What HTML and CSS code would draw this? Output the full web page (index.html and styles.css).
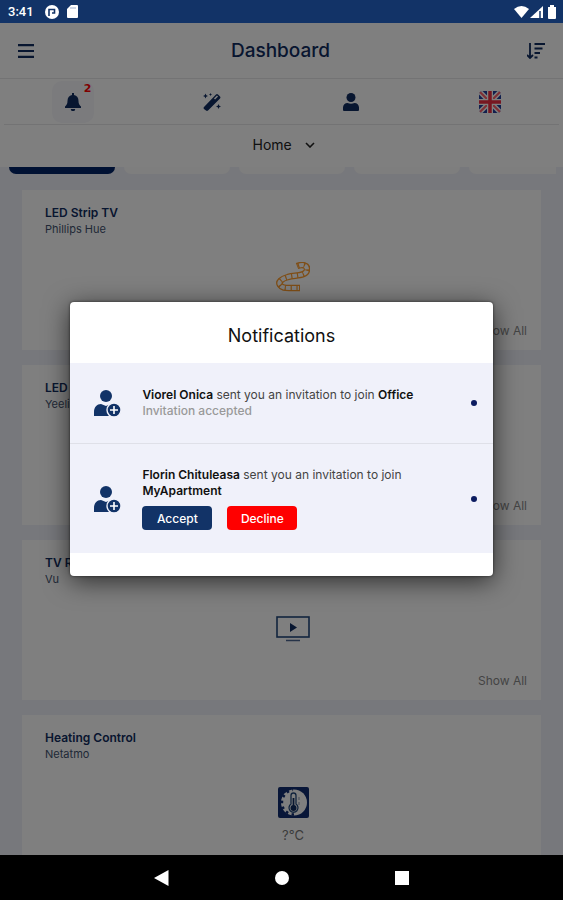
FILE: index.html
```
<!DOCTYPE html>
<html lang="en">

<head>
    <title>Dashboard</title>
    <meta charset="utf-8">
    <meta name="viewport" content="width=device-width, initial-scale=1.0">
    <link rel="stylesheet" href="styles.css">
</head>

<body>
    <!-- shared person icon -->
    <svg class="defs" width="0" height="0">
        <symbol id="invite" viewBox="0 0 28 28">
            <circle cx="13" cy="7" r="6" />
            <path d="M1 27v-4c0-5 3-8 7-8l5 2 5-2c3 0 5 2 6 4v8H3c-1 0-2 0-2 0z" />
            <circle cx="21" cy="21" r="7" stroke="#f0f1fa" stroke-width="1.4" />
            <path d="M21 17v8M17 21h8" fill="none" stroke="#fff" stroke-width="1.6" />
        </symbol>
    </svg>

    <div class="status">
        <span class="time">3:41</span>
        <svg width="14" height="14" viewBox="0 0 14 14">
            <circle cx="7" cy="7" r="7" fill="#fff" />
            <path d="M4 11V4.500h5.500V8H7" fill="none" stroke="#123367" stroke-width="1.600" />
        </svg>
        <svg width="11" height="13" viewBox="0 0 11 13">
            <path d="M4 0h6a1 1 0 0 1 1 1v11a1 1 0 0 1-1 1H1a1 1 0 0 1-1-1V4z" fill="#fff" />
            <path d="M4 2v2M6 2v2M8 2v2" stroke="#9fb0cd" />
        </svg>
        <svg class="signal" width="44" height="14" viewBox="0 0 44 14" fill="#fff">
            <path d="M0 4q7.500-6 15 0L7.500 13z" />
            <path d="M16 13L29 1v12z" />
            <path d="M26 6v7" stroke="#123367" stroke-width="1.500" />
            <path d="M34 2h2V0h4v2h2v11a1 1 0 0 1-1 1h-6a1 1 0 0 1-1-1z" />
        </svg>
    </div>

    <div class="screen">
        <header class="header">
            <button class="icon-btn" aria-label="Menu">
                <svg width="16" height="14" viewBox="0 0 16 14">
                    <path d="M0 1.200h16M0 7h16M0 12.800h16" stroke="#102c60" stroke-width="2.200" />
                </svg>
            </button>
            <h1>Dashboard</h1>
            <button class="icon-btn" aria-label="Sort">
                <svg width="18" height="16" viewBox="0 0 18 16" fill="none" stroke="#102c60" stroke-width="1.800">
                    <path d="M3 0v14M0 12l3 3 3-3M7.500 1H18M7.500 5.500h8M7.500 10h5.500M7.500 14.500h3" />
                </svg>
            </button>
        </header>

        <nav class="toolbar">
            <button class="tool active" aria-label="Notifications">
                <svg width="16" height="18" viewBox="0 0 16 18" fill="#102c60">
                    <path d="M7 0h2v2c3 .5 4.500 3 4.500 6 0 3 1 4 2.500 5.500V15H0v-1.500C1.500 12 2.500 11 2.500 8c0-3 1.500-5.500 4.500-6z" />
                    <path d="M5.800 16h4.400a2.200 2.200 0 0 1-4.400 0z" />
                </svg>
                <span class="badge">2</span>
            </button>
            <button class="tool" aria-label="Scenes">
                <svg width="18" height="18" viewBox="0 0 18 18" fill="#102c60">
                    <path d="M1 14L13 1.500a1.500 1.500 0 0 1 2 0L17 3.500a1.500 1.500 0 0 1 0 2L5 17.500a1.500 1.500 0 0 1-2 0L1 16a1.500 1.500 0 0 1 0-2z" />
                    <path d="M11.500 6L14.500 3" stroke="#fff" stroke-width="1.600" />
                    <path d="M2.500 .5l.8 1.700 1.700.8-1.700.8-.8 1.700-.8-1.700L0 3l1.700-.8zM15.500 11l.8 1.700 1.700.8-1.700.8-.8 1.700-.8-1.700-1.700-.8 1.700-.8zM7.500 0l.5 1 1 .5-1 .5-.5 1-.5-1-1-.5 1-.5z" />
                </svg>
            </button>
            <button class="tool" aria-label="Profile">
                <svg width="16" height="18" viewBox="0 0 16 18" fill="#102c60">
                    <circle cx="8" cy="4.500" r="4.500" />
                    <path d="M0 17v-2.500C0 12 2 10 4.500 10q3.500 1.600 7 0C14 10 16 12 16 14.500V17a1 1 0 0 1-1 1H1a1 1 0 0 1-1-1z" />
                </svg>
            </button>
            <button class="tool" aria-label="Language">
                <svg class="flag" width="22" height="22" viewBox="0 0 22 22">
                    <rect width="22" height="22" fill="#233f9c" />
                    <path d="M0 0l22 22M22 0L0 22" stroke="#fff" stroke-width="5" />
                    <path d="M0 0l22 22M22 0L0 22" stroke="#ff5f6b" stroke-width="2" />
                    <path d="M11 0v22M0 11h22" stroke="#fff" stroke-width="6" />
                    <path d="M11 0v22M0 11h22" stroke="#ee2f42" stroke-width="3.500" />
                </svg>
            </button>
        </nav>

        <div class="home">
            <select aria-label="Home">
                <option>Home</option>
            </select>
            <svg width="10" height="6" viewBox="0 0 10 6">
                <path d="M1 1l4 4 4-4" fill="none" stroke="#222" stroke-width="1.600" />
            </svg>
        </div>

        <main class="content">
            <div class="tabs">
                <span class="tab selected"></span>
                <span class="tab"></span>
                <span class="tab"></span>
                <span class="tab"></span>
                <span class="tab"></span>
            </div>

            <div class="cards">
                <section class="card">
                    <h2>LED Strip TV</h2>
                    <p class="brand">Phillips Hue</p>
                    <div class="device">
                        <svg width="34" height="30" viewBox="0 0 34 30" fill="none">
                            <path d="M21 4c5-2 11-1 10 4-1 6-10 5-19 7C5 17 2 20 4 23c2 3 5 3 9 3h11" stroke="#ff9d2e" stroke-width="6.500" />
                            <path d="M22 4c5-2 9-1 9 4-1 6-10 5-19 7C5 17 2 20 4 23c2 3 5 3 9 3h10" stroke="#fff" stroke-width="4" />
                            <path d="M22 4c5-2 9-1 9 4-1 6-10 5-19 7C5 17 2 20 4 23c2 3 5 3 9 3h11" stroke="#ff9d2e" stroke-width="5" stroke-dasharray="1.200 4.600" />
                        </svg>
                    </div>
                    <a class="more" href="#">Show All</a>
                </section>
                <section class="card">
                    <h2>LED Strip</h2>
                    <p class="brand">Yeelight</p>
                    <div class="device"></div>
                    <a class="more" href="#">Show All</a>
                </section>
                <section class="card">
                    <h2>TV Room</h2>
                    <p class="brand">Vu</p>
                    <div class="device">
                        <svg width="34" height="30" viewBox="0 -4 34 30">
                            <rect x="1" y="1" width="32" height="20" fill="none" stroke="#24497c" stroke-width="1.600" />
                            <path d="M14 7l7 4.500-7 4.500z" fill="#102c60" />
                            <path d="M10 24.500h14" stroke="#4c6690" stroke-width="1.500" />
                        </svg>
                    </div>
                    <a class="more" href="#">Show All</a>
                </section>
                <section class="card">
                    <h2>Heating Control</h2>
                    <p class="brand">Netatmo</p>
                    <div class="device">
                        <svg width="31" height="31" viewBox="0 0 31 31">
                            <rect width="31" height="31" rx="2" fill="#102c70" />
                            <circle cx="16" cy="15.500" r="13" fill="#fff" />
                            <path d="M16 27.500a12 12 0 0 1-9-20 12 12 0 0 1 8-4.500" fill="none" stroke="#102c70" stroke-width="2.500" stroke-dasharray="2.500 3.500" />
                            <path d="M13 8.500a2.500 2.500 0 0 1 5 0V17a4.500 4.500 0 1 1-5 0z" fill="#fff" stroke="#24497c" stroke-width="1.300" />
                            <circle cx="15.500" cy="21" r="3" fill="#102c60" />
                            <path d="M15.500 11v9" stroke="#102c60" stroke-width="1.800" />
                            <path d="M21 10v3M21 15v3" stroke="#8796b0" />
                        </svg>
                        <span class="temp">?°C</span>
                    </div>
                </section>
            </div>
        </main>

        <div class="overlay">
            <div class="modal" role="dialog" aria-labelledby="modal-title">
                <h2 class="modal-title" id="modal-title">Notifications</h2>
                <ul class="list">
                    <li class="item">
                        <svg class="avatar" width="28" height="28"><use href="#invite" /></svg>
                        <div class="message">
                            <p><b>Viorel Onica</b> sent you an invitation to join <b>Office</b></p>
                            <p class="accepted">Invitation accepted</p>
                        </div>
                        <span class="dot"></span>
                    </li>
                    <li class="item tall">
                        <svg class="avatar" width="28" height="28"><use href="#invite" /></svg>
                        <div class="message">
                            <p><b>Florin Chituleasa</b> sent you an invitation to join <b>MyApartment</b></p>
                            <div class="actions">
                                <button class="accept">Accept</button>
                                <button class="decline">Decline</button>
                            </div>
                        </div>
                        <span class="dot"></span>
                    </li>
                </ul>
            </div>
        </div>
    </div>

    <nav class="android">
        <button class="icon-btn" aria-label="Back">
            <svg width="16" height="16" viewBox="0 0 16 16"><path d="M14.500 0v16L0 8z" fill="#fff" /></svg>
        </button>
        <button class="icon-btn" aria-label="Home screen">
            <svg width="16" height="16" viewBox="0 0 16 16"><circle cx="8" cy="8" r="7" fill="#fff" /></svg>
        </button>
        <button class="icon-btn" aria-label="Recent apps">
            <svg width="16" height="16" viewBox="0 0 16 16"><rect x="1" y="1" width="14" height="14" fill="#fff" /></svg>
        </button>
    </nav>
</body>

</html>
```

FILE: styles.css
```
* {
    box-sizing: border-box;
}

body {
    margin: 0;
    height: 100vh;
    display: flex;
    flex-direction: column;
    overflow: hidden;
    font-family: Inter, "Open Sans", sans-serif;
    font-size: 12px;
    line-height: 16px;
    color: #444;
}

h1,
h2,
p,
ul {
    margin: 0;
    padding: 0;
}

button {
    font-family: inherit;
    border: 0;
    padding: 0;
    background: none;
    cursor: pointer;
}

svg {
    display: block;
}

.defs {
    position: absolute;
}

.status {
    flex: none;
    display: flex;
    align-items: center;
    gap: 8px;
    height: 23px;
    padding: 0 5px 0 8px;
    background-color: #123367;
    color: #fff;
}

.time {
    margin-right: 3px;
    font-family: Roboto, sans-serif;
    font-size: 13px;
    font-weight: 500;
}

.signal {
    margin-left: auto;
}

.screen {
    flex: 1;
    min-height: 0;
    position: relative;
    display: flex;
    flex-direction: column;
    overflow: hidden;
    background-color: #fff;
}

.header {
    flex: none;
    display: flex;
    justify-content: space-between;
    align-items: center;
    height: 56px;
    padding: 0 18px;
    border-bottom: 1px solid #e6e6e8;
}

.header h1 {
    font-size: 19px;
    line-height: 24px;
    font-weight: 500;
    color: #102c60;
}

.toolbar {
    flex: none;
    display: grid;
    grid-template-columns: repeat(4, 1fr);
    justify-items: center;
    align-items: center;
    height: 46px;
    margin: 0 4px;
    border-bottom: 1px solid #e6e6e8;
}

.tool {
    position: relative;
    display: flex;
    justify-content: center;
    align-items: center;
    width: 42px;
    height: 42px;
    border-radius: 10px;
}

.tool.active {
    background-color: #f6f6fb;
}

.badge {
    position: absolute;
    top: 1px;
    right: 3px;
    font-family: "DejaVu Sans", sans-serif;
    font-size: 11px;
    line-height: 14px;
    font-weight: bold;
    color: #f00;
}

.flag {
    border-radius: 4px;
}

.home {
    flex: none;
    display: flex;
    justify-content: center;
    align-items: center;
    gap: 12px;
    height: 42px;
    padding: 0 0 3px 4px;
}

.home select {
    appearance: none;
    border: 0;
    padding: 0;
    background: none;
    font-family: inherit;
    font-size: 14px;
    color: #222;
}

.content {
    flex: 1;
    min-height: 0;
    overflow: hidden;
    background-color: #eff0f8;
}

.tabs {
    display: flex;
    gap: 9px;
    margin: 0 7px 0 9px;
    overflow: hidden;
}

.tab {
    flex: none;
    width: 106px;
    height: 7px;
    border-radius: 0 0 7px 7px;
    background-color: #fcfcfc;
}

.tab.selected {
    background-color: #002266;
}

.cards {
    display: grid;
    gap: 15px;
    padding: 16px 22px;
}

.card {
    display: flex;
    flex-direction: column;
    height: 160px;
    padding: 14px 0 11px 23px;
    background-color: #fff;
}

.card h2 {
    font-size: 12px;
    line-height: 17px;
    font-weight: 600;
    color: #102c60;
}

.brand {
    font-size: 11px;
    color: #42526e;
}

.device {
    flex: 1;
    display: flex;
    flex-direction: column;
    align-items: center;
    padding-top: 25px;
}

.temp {
    margin-top: 9px;
    font-size: 13px;
    color: #777;
}

.more {
    align-self: flex-end;
    margin-right: 14px;
    text-decoration: none;
    color: #888;
}

.overlay {
    position: absolute;
    inset: 0;
    display: flex;
    justify-content: center;
    align-items: center;
    background-color: rgba(0, 0, 0, .5);
}

.modal {
    width: 75%;
    padding-bottom: 23px;
    background-color: #fff;
    border-radius: 4px;
    box-shadow: 0 5px 26px rgba(0, 0, 0, .65), 0 0 3px rgba(0, 0, 0, .6);
}

.modal-title {
    padding: 22px 0 15px;
    font-size: 18px;
    line-height: 24px;
    font-weight: 400;
    text-align: center;
    color: #111;
}

.list {
    list-style: none;
    background-color: #f0f1fa;
}

.item {
    display: flex;
    align-items: center;
    padding: 24px 16px 24px 23px;
}

.item.tall {
    padding-top: 23px;
    padding-bottom: 23px;
    border-top: 1px solid #dfe0e8;
}

.avatar {
    flex: none;
    fill: #123367;
}

.message {
    flex: 1;
    padding: 0 50px 0 21px;
}

.message b {
    font-weight: 600;
    color: #111;
}

.accepted {
    font-weight: 500;
    color: #999;
}

.actions {
    display: flex;
    gap: 15px;
    margin-top: 7px;
}

.accept,
.decline {
    width: 70px;
    height: 24px;
    border-radius: 4px;
    font-size: 12px;
    font-weight: 500;
    color: #fff;
}

.accept {
    background-color: #123367;
}

.decline {
    background-color: #f00;
}

.dot {
    flex: none;
    width: 6px;
    height: 6px;
    border-radius: 3px;
    background-color: #0c1c60;
}

.android {
    flex: none;
    display: flex;
    justify-content: center;
    align-items: center;
    gap: 104px;
    height: 45px;
    background-color: #000;
}
```
